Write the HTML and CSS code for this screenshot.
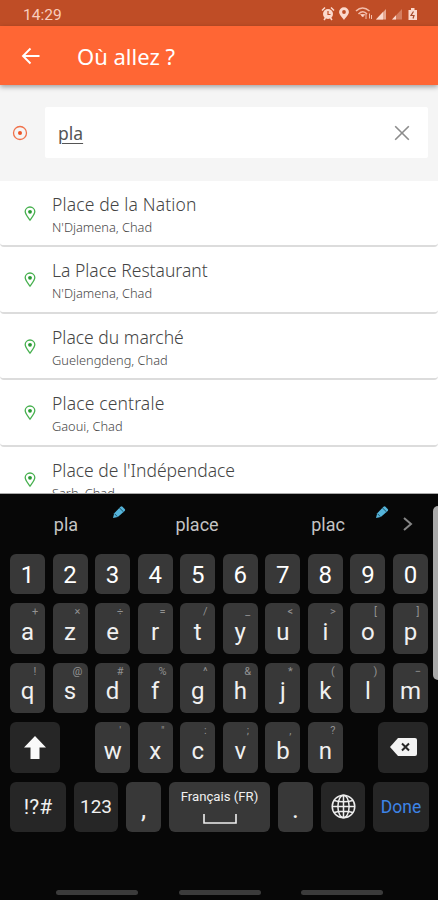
FILE: index.html
```html
<!DOCTYPE html>
<html lang="fr">
<head>
<meta charset="utf-8">
<title>Où allez ?</title>
<link rel="stylesheet" href="styles.css">
</head>
<body>
<svg width="0" height="0" class="defs">
  <symbol id="pin" viewBox="0 0 12 16"><path d="M6 14.2C3.6 10.8 1.2 8.3 1.2 5.6a4.8 4.6 0 0 1 9.6 0C10.8 8.3 8.4 10.800 6 14.200Z" fill="none" stroke="#46b04e" stroke-width="1.300"/><circle cx="6" cy="5.800" r="1.900" fill="#289a32"/></symbol>
  <symbol id="pencil" viewBox="0 0 14 14"><path d="M1 13 2.200 8.200 8.500 1.800a1.500 1.500 0 0 1 2 0L12.700 4a1.500 1.500 0 0 1 0 2L5.800 12Z" fill="#55b4da"/><path d="M2.500 8.700 5.400 11.700M7.600 3 11.500 6.900" stroke="#174456" stroke-width=".9"/></symbol>
</svg>
<header class="status">
  <span class="clock">14:29</span>
  <svg class="status-icons" width="98" height="16" viewBox="0 0 98 16">
    <g fill="#fbd9cd">
      <circle cx="7" cy="8" r="5"/><path d="M1 4.500 4 1.500M13 4.500 10 1.500M3 14l1.500-2M11 14l-1.500-2" stroke="#fbd9cd" stroke-width="1.500"/>
      <path d="M7 5v3.500h2.500" fill="none" stroke="#bf4d26" stroke-width="1.200"/>
      <path d="M23 14c-2.300-3.400-4.900-5.400-4.900-8a4.900 4.700 0 0 1 9.800 0c0 2.600-2.600 4.600-4.900 8Z"/><circle cx="23" cy="6" r="1.900" fill="#bf4d26"/>
      <path d="M35 5q6.500-6 13.500 0M37.500 8q4.500-4.500 8.500 0" fill="none" stroke="#f3bdab" stroke-width="1.600"/><path d="m41.700 11-2-2.500h4ZM45 8v5M48.500 7.500v5M50.500 9v4" stroke="#f3bdab"/>
      <path d="M55 13.500 65 3v10.500Z" opacity=".65"/><path d="M55 13.500 62 6v7.500Z"/>
      <path d="M71 13.500 81 3v10.500Z" opacity=".35"/><path d="M71 13.500 75 9.200v4.300Z"/>
      <path d="M90 2h3.500v2H96v10h-8.500V4H90Z"/><path d="m92.500 5.500-2.500 4h3l-1 3" fill="none" stroke="#a64b2b" stroke-width="1.200"/>
    </g>
  </svg>
</header>
<div class="appbar">
  <svg width="20" height="18" viewBox="0 0 20 18"><path d="M18.500 9H2M9.500 1.500 2 9l7.500 7.500" fill="none" stroke="#fff" stroke-width="1.900"/></svg>
  <h1>Où allez ?</h1>
</div>
<div class="search">
  <svg width="16" height="16" viewBox="0 0 16 16"><circle cx="8" cy="8" r="6.500" fill="none" stroke="#f0714a" stroke-width="1.300"/><circle cx="8" cy="8" r="2" fill="#ed5426"/></svg>
  <div class="field"><span>pla</span>
    <svg width="16" height="16" viewBox="0 0 16 16"><path d="m1.200 1.200 13.600 13.600M14.800 1.200 1.200 14.800" stroke="#8c8c8c" stroke-width="1.600"/></svg>
  </div>
</div>
<main class="results">
  <div class="place"><svg class="pin"><use href="#pin"/></svg><div><h2 class="spaced">Place de la Nation</h2><p>N'Djamena, Chad</p></div></div>
  <div class="place"><svg class="pin"><use href="#pin"/></svg><div><h2>La Place Restaurant</h2><p>N'Djamena, Chad</p></div></div>
  <div class="place"><svg class="pin"><use href="#pin"/></svg><div><h2>Place du marché</h2><p>Guelengdeng, Chad</p></div></div>
  <div class="place"><svg class="pin"><use href="#pin"/></svg><div><h2 class="spaced">Place centrale</h2><p>Gaoui, Chad</p></div></div>
  <div class="place"><svg class="pin"><use href="#pin"/></svg><div><h2>Place de l'Indépendace</h2><p>Sarh, Chad</p></div></div>
</main>
<section class="keyboard">
  <div class="suggestions">
    <span>pla<svg class="pencil"><use href="#pencil"/></svg></span>
    <span>place</span>
    <span>plac<svg class="pencil"><use href="#pencil"/></svg></span>
    <svg class="more" width="10" height="16" viewBox="0 0 10 16"><path d="m1 2 7 6-7 6" fill="none" stroke="#858585" stroke-width="2"/></svg>
  </div>
  <div class="keys numbers"><b>1</b><b>2</b><b>3</b><b>4</b><b>5</b><b>6</b><b>7</b><b>8</b><b>9</b><b>0</b></div>
  <div class="keys"><b>a<i>+</i></b><b>z<i>×</i></b><b>e<i>÷</i></b><b>r<i>=</i></b><b>t<i>/</i></b><b>y<i>_</i></b><b>u<i>&lt;</i></b><b>i<i>&gt;</i></b><b>o<i>[</i></b><b>p<i>]</i></b></div>
  <div class="keys"><b>q<i>!</i></b><b>s<i>@</i></b><b>d<i>#</i></b><b>f<i>%</i></b><b>g<i>^</i></b><b>h<i>&amp;</i></b><b>j<i>*</i></b><b>k<i>(</i></b><b>l<i>)</i></b><b>m<i>−</i></b></div>
  <div class="keys letters">
    <b class="dark wide"><svg width="22" height="23" viewBox="0 0 22 23"><path d="M11 0 22 11.500h-6.500V23h-9V11.500H0Z" fill="#fafafa"/></svg></b>
    <b class="first">w<i>'</i></b><b>x<i>"</i></b><b>c<i>:</i></b><b>v<i>;</i></b><b>b<i>,</i></b><b>n<i>?</i></b>
    <b class="dark wide last"><svg width="27" height="18" viewBox="0 0 27 18"><path d="M8 0h17a2 2 0 0 1 2 2v14a2 2 0 0 1-2 2H8L0 9Z" fill="#f3f3f3"/><path d="m12 5.500 7 7m0-7-7 7" stroke="#262626" stroke-width="2"/></svg></b>
  </div>
  <div class="keys bottom">
    <b class="dark symbols">!?#</b><b class="dark digits">123</b><b class="mark">,</b>
    <b class="space"><span>Français (FR)</span><svg width="34" height="10" viewBox="0 0 34 10"><path d="M1 0v9h32V0" fill="none" stroke="#eee" stroke-width="1.600"/></svg></b>
    <b class="mark">.</b>
    <b class="dark globe"><svg width="25" height="25" viewBox="0 0 25 25"><g fill="none" stroke="#eee" stroke-width="1.500"><circle cx="12.500" cy="12.500" r="11.300"/><ellipse cx="12.500" cy="12.500" rx="5.600" ry="11.300"/><path d="M12.500 1v23M1 12.500h23M3 6.500q9.500 2.600 19 0M3 18.500q9.500-2.600 19 0"/></g></svg></b>
    <b class="dark done">Done</b>
  </div>
  <div class="nav"><span></span><span></span><span></span></div>
  <div class="edge"></div>
</section>
</body>
</html>
```
FILE: styles.css
```css
* { box-sizing: border-box; margin: 0; }
body { width: 438px; height: 900px; overflow: hidden; display: flex; flex-direction: column; background: #f5f5f5; font-family: "Noto Sans", sans-serif; }
.defs { position: absolute; }
.status { flex: none; height: 26px; padding: 3px 18px 0 23px; background: #bf4d26; display: flex; justify-content: space-between; align-items: center; }
.clock { font: 15.5px Roboto, sans-serif; color: #f9cebe; }
.status-icons { margin: -1px 1px 0 0; }
.appbar { flex: none; height: 59px; background: #ff6634; display: flex; align-items: center; padding: 1px 0 0 21px; gap: 36px; box-shadow: 0 2px 5px rgba(0,0,0,.35); position: relative; }
.appbar h1 { font-size: 22px; font-weight: 400; color: #fff; }
.search { flex: none; height: 96px; display: flex; align-items: center; padding: 0 10px 0 12px; gap: 17px; }
.field { flex: 1; height: 51px; background: #fff; border-radius: 2px; display: flex; align-items: center; justify-content: space-between; padding: 0 18px 0 13px; margin-top: -1px; }
.field span { font-size: 17.5px; color: #555; text-decoration: underline; text-decoration-thickness: 1px; text-underline-offset: 3px; }
.results { flex: none; height: 313px; overflow: hidden; background: #fff; border-bottom: 1px solid #aaa; }
.place { height: 66.4px; display: flex; align-items: flex-start; padding: 10px 0 0 24px; gap: 16px; border-bottom: 2px solid #dcdcdc; border-radius: 4px; }
.pin { width: 12px; height: 16px; margin-top: 15px; flex: none; }
.place h2 { font-size: 17.5px; line-height: 26px; font-weight: 300; color: #444; }
.place .spaced { letter-spacing: .15px; }
.place p { font-size: 12.8px; line-height: 20px; font-weight: 300; color: #484848; }
.keyboard { flex: 1; position: relative; background: #070707; font-family: Roboto, sans-serif; padding: 0 10px; }
.suggestions { height: 60px; padding-top: 1px; display: grid; grid-template-columns: 112px 150px 112px 1fr; align-items: center; justify-items: center; font-size: 18px; color: #c4c4c4; }
.suggestions span { position: relative; }
.pencil { position: absolute; width: 14px; height: 14px; left: calc(100% + 34px); top: -9px; }
.suggestions span:nth-child(3) .pencil { left: calc(100% + 30px); }
.more { margin: -1px 0 0 4px; }
.keys { height: 50.500px; margin-bottom: 9px; display: flex; justify-content: space-between; }
.keys b { position: relative; width: 35px; border-radius: 6px; background: #383838; color: #f0f0f0; font-size: 24px; font-weight: 400; display: flex; align-items: center; justify-content: center; padding-top: 7px; }
.numbers { height: 40px; }
.numbers b { padding-top: 1px; color: #fff; }
.keys i { position: absolute; top: 2px; right: 3px; width: 14px; text-align: center; font-size: 11px; line-height: 13px; font-style: normal; color: #929292; }
.keys .dark { background: #262626; padding-top: 0; }
.keys .wide { width: 50px; }
.letters { justify-content: flex-start; gap: 7.550px; }
.letters .first { margin-left: 27.700px; }
.letters .last { margin-left: auto; }
.keys .symbols { width: 56px; font-size: 21px; }
.keys .digits { width: 44px; font-size: 19px; }
.keys .mark { align-items: flex-end; padding-bottom: 8px; font-size: 26px; }
.keys .space { width: 101px; flex-direction: column; justify-content: flex-start; padding-top: 6px; font-size: 13.2px; gap: 8px; }
.space span { line-height: 18px; }
.keys .globe { width: 44px; }
.keys .done { width: 56px; font-size: 17.5px; color: #3d84e6; }
.bottom { margin-right: -1px; }
.nav { display: flex; gap: 40.500px; padding-left: 46px; margin-top: 58px; }
.nav span { width: 82px; height: 5px; border-radius: 3px; background: #3b3b3b; }
.edge { position: absolute; right: 0; top: 12px; width: 5px; height: 174px; border-radius: 5px 0 0 5px; background: #aaa; }
```
